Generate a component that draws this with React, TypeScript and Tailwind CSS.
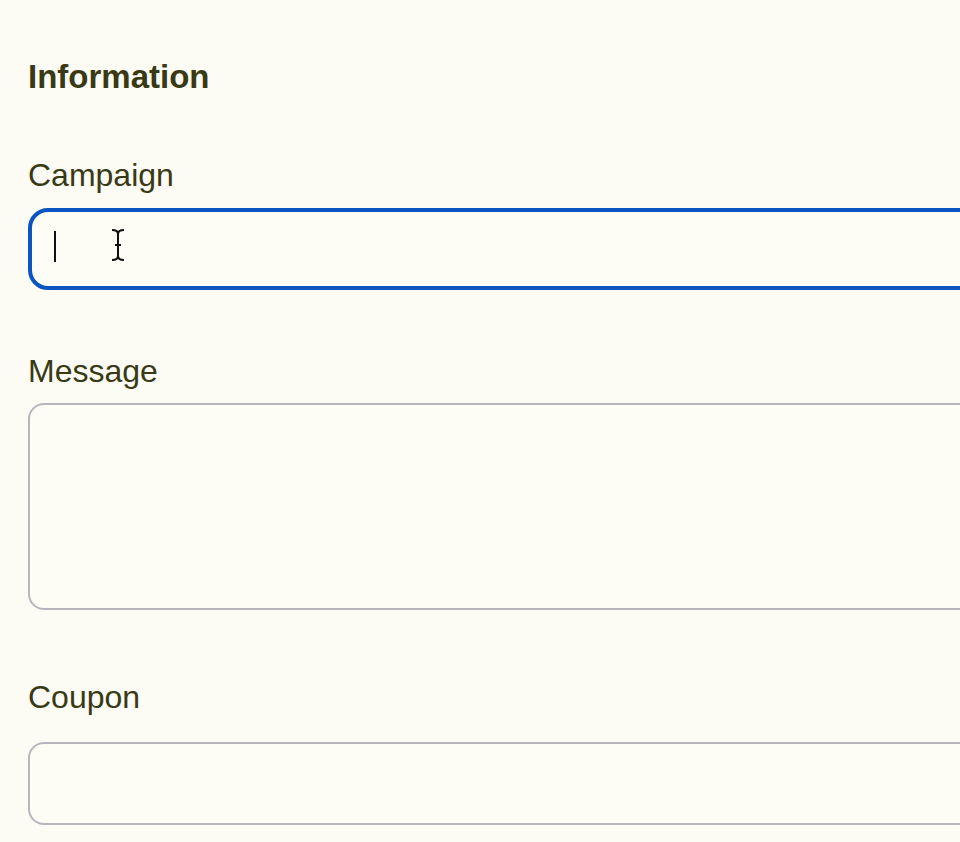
import React from "react";

const labelCls = "block text-[32px] leading-[40px] text-[#393915]";

const IBeam: React.FC = () => (
  <svg width="16" height="34" viewBox="0 0 16 34" className="absolute left-[78px] top-[16px]" fill="none" stroke="#111" strokeWidth="2">
    <path d="M2 2 C6 2 8 3 8 6 C8 3 10 2 14 2" />
    <path d="M8 6 V28" />
    <path d="M5 17 H11" />
    <path d="M2 32 C6 32 8 31 8 28 C8 31 10 32 14 32" />
  </svg>
);

const App: React.FC = () => {
  return (
    <div className="w-[960px] h-[842px] overflow-hidden bg-[#fcfcf4] font-['Liberation_Sans',Arial,sans-serif]">
      <div className="pl-7 pt-[57px]">
        <h2 className="text-[33px] leading-[40px] font-bold text-[#393915]">Information</h2>

        <label className={`${labelCls} mt-[58px]`}>Campaign</label>
        <div className="relative mt-[13px] w-[1000px] h-[82px] rounded-[20px] border-4 border-[#0b55c3] bg-[#fdfdf6]">
          <div className="absolute left-[22px] top-[19px] w-[2px] h-[31px] bg-[#111]" />
          <IBeam />
        </div>

        <label className={`${labelCls} mt-[61px]`}>Message</label>
        <div className="mt-[12px] w-[1000px] h-[207px] rounded-[16px] border-2 border-[#b6b6bc] bg-[#fdfdf6]" />

        <label className={`${labelCls} mt-[67px]`}>Coupon</label>
        <div className="mt-[25px] w-[1000px] h-[83px] rounded-[16px] border-2 border-[#b6b6bc] bg-[#fdfdf6]" />
      </div>
    </div>
  );
};

export default App;
